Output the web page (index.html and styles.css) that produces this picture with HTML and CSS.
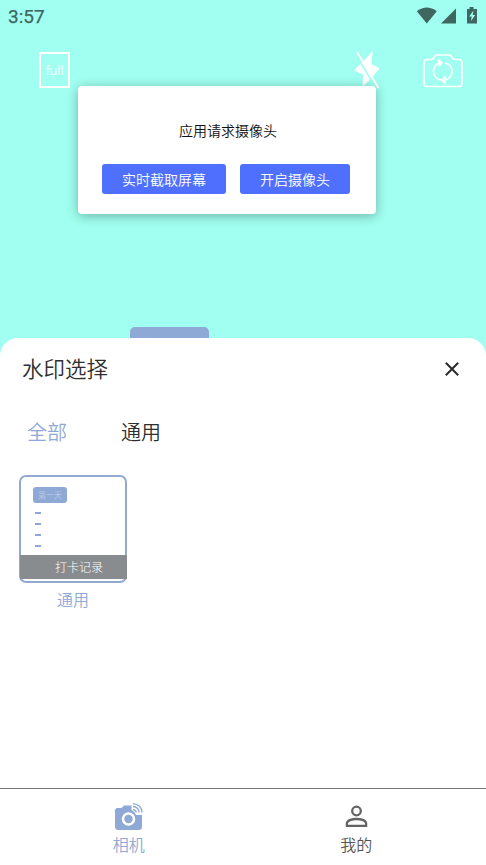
FILE: index.html
```html
<!DOCTYPE html>
<html lang="zh-CN">
<head>
<meta charset="utf-8">
<title>水印相机</title>
<link rel="stylesheet" href="styles.css">
</head>
<body>
<main class="phone">
  <section class="camera">
    <header class="status">
      <span class="time">3:57</span>
      <svg class="status-icons" width="62" height="20" viewBox="0 0 62 20" fill="#3f665f">
        <path d="M.8 4.300Q10.800-3.200 20.800 4.300L10.800 16.500Z"/>
        <path d="M25 16.500L40 1.500V16.500Z"/>
        <path d="M51 2h2.500V0h4v2H61v14.500H51Z"/>
        <path d="M57.500 3.500l-4.300 6h2.500l-.7 4.500 4.200-6h-2.500Z" fill="#a0fff0"/>
      </svg>
    </header>
    <div class="tools">
      <span class="full">full</span>
      <svg class="flash" width="28" height="40" viewBox="0 0 28 40">
        <path d="M18.500 1L10.500 10 0 20.500 9 24.500 8.500 37 16.500 29 25.500 18.500 17.500 14Z" fill="#fff"/>
        <path d="M1.500 4L23 40" stroke="#a0fff0" stroke-width="1.500"/>
        <path d="M3 2L24.500 38" stroke="#fff" stroke-width="2"/>
      </svg>
      <svg class="flip" width="40" height="34" viewBox="0 0 40 34" fill="none" stroke="#fff" stroke-width="1.700" stroke-linejoin="round" stroke-linecap="round">
        <path d="M4 5.500H8Q10 5.500 11 3.500L12 2Q12.500 1 14 1H26Q27.500 1 28 2L29 3.500Q30 5.500 32 5.500H36Q39 5.500 39 8.500V29.500Q39 32.500 36 32.500H4Q1 32.500 1 29.500V8.500Q1 5.500 4 5.500Z"/>
        <path d="M18 26C8 24.500 8 9.500 18 8.500M22.500 9C31.500 12 31.500 24 20.500 26.500"/>
        <path d="M15.500 5.500L19.500 8.500 16.500 12.500ZM22 22.500L18.500 26.500 22 29.500Z" fill="#fff" stroke-width="1"/>
      </svg>
    </div>
    <div class="badge"></div>
    <div class="dialog">
      <p class="dialog-text">应用请求摄像头</p>
      <div class="dialog-actions">
        <button class="btn">实时截取屏幕</button>
        <button class="btn btn-small">开启摄像头</button>
      </div>
    </div>
  </section>
  <section class="sheet">
    <header class="sheet-head">
      <h1 class="title">水印选择</h1>
      <svg width="14" height="14" viewBox="0 0 14 14" stroke="#2b2b2b" stroke-width="2"><path d="M.8.8L13.200 13.200M13.200.8L.8 13.200"/></svg>
    </header>
    <nav class="tabs"><span class="active">全部</span><span>通用</span></nav>
    <div class="card">
      <div class="thumb">
        <span class="tag">第一天</span>
        <div class="dashes"><i></i><i></i><i></i><i></i></div>
        <div class="caption">打卡记录</div>
      </div>
      <span class="card-name">通用</span>
    </div>
  </section>
  <nav class="bottom">
    <div class="item active">
      <svg width="29" height="30" viewBox="0 0 29 30">
        <path d="M3.500 6H7.500L10 3.500H17.500V8Q21 9.500 22 13H28V24.500Q28 28 24.500 28H4.500Q1 28 1 24.500V8.500Q1 6 3.500 6Z" fill="#8ea9d5"/>
        <circle cx="14.500" cy="17" r="5.500" fill="none" stroke="#fff" stroke-width="2.600"/>
        <path d="M19 7.500Q22 8 22.300 10.500M19 4.500Q24.700 5 25.200 10.500M19 1.700Q27.500 2.500 28 10.500" fill="none" stroke="#8ea9d5" stroke-width="1.300"/>
      </svg>
      <span>相机</span>
    </div>
    <div class="item">
      <svg width="29" height="30" viewBox="0 0 29 30" fill="none" stroke="#646464" stroke-width="2.300">
        <circle cx="14.500" cy="9" r="4.300"/>
        <path d="M4.900 23.800V21.500C4.900 15.500 24.100 15.500 24.100 21.500V23.800Z"/>
      </svg>
      <span>我的</span>
    </div>
  </nav>
</main>
</body>
</html>
```
FILE: styles.css
```css
* { box-sizing: border-box; }
body { margin: 0; font-family: "Noto Sans CJK SC", sans-serif; font-weight: 350; }
.phone { width: 486px; height: 865px; display: flex; flex-direction: column; background: #a0fff0; overflow: hidden; }
.camera { position: relative; height: 338px; flex: none; display: flex; flex-direction: column; }
.status { height: 34px; padding: 0 8px; display: flex; align-items: center; justify-content: space-between; }
.time { font: 400 19px/34px Roboto, sans-serif; color: #3f665f; -webkit-text-stroke: .25px #3f665f; }
.status-icons { margin-top: -1px; }
.tools { height: 58px; padding: 14px 23px 0 39px; display: flex; align-items: flex-start; }
.full { width: 31px; height: 36px; margin-top: 4px; border: 2px solid #fff; color: #fff; font: 400 12.500px/34px "Open Sans", sans-serif; text-align: center; }
.flash { margin: 2px 0 0 284px; }
.flip { margin: 6px 0 0 auto; }
.badge { width: 79px; height: 11px; margin: auto 0 0 130px; border-radius: 5px 5px 0 0; background: #8ea9d5; }
.dialog { position: absolute; left: 78px; top: 86px; width: 298px; height: 128px; padding: 33px 24px 20px; border-radius: 4px; background: #fff; box-shadow: 0 2px 12px rgba(0,0,0,.3); }
.dialog-text { margin: 0 0 23px; font-size: 14px; line-height: 22px; text-align: center; color: #111; text-indent: 2px; }
.dialog-actions { display: flex; gap: 14px; }
.btn { width: 124px; height: 30px; padding: 0; border: 0; border-radius: 3px; background: #4f70ff; color: #fff; font: inherit; font-size: 14px; line-height: 30px; }
.btn-small { width: 110px; }
.sheet { height: 450px; flex: none; border-radius: 18px 18px 0 0; background: #fff; color: #2f2f2f; }
.sheet-head { height: 62px; padding: 0 27px 0 22px; display: flex; align-items: center; justify-content: space-between; }
.title { margin: -2px 0 0; font-size: 21.500px; line-height: 32px; font-weight: inherit; }
.tabs { height: 64px; padding: 0 0 2px 27px; display: flex; gap: 54px; align-items: center; font-size: 20px; }
.active { color: #8ea9d5; }
.card { width: 108px; margin: 11px 0 0 19px; display: flex; flex-direction: column; align-items: center; }
.thumb { width: 108px; height: 108px; padding-top: 10px; display: flex; flex-direction: column; border: 2px solid #93aad0; border-radius: 7px; }
.tag { width: 34px; height: 16px; margin-left: 12px; border-radius: 3px; background: #8ea9d5; color: #cddaf0; font: 300 8px/15px "Noto Sans CJK SC", sans-serif; text-align: center; }
.dashes { margin: 9px 0 0 14px; display: flex; flex-direction: column; gap: 9px; }
.dashes i { width: 6px; height: 2px; background: #8ea9d5; }
.caption { height: 24px; margin: auto -2px 2px -1px; padding-left: 11px; background: #888c8e; color: #fff; font-size: 12px; font-weight: 300; line-height: 24px; text-align: center; }
.card-name { margin-top: 5px; color: #8ea9d5; font-size: 16px; line-height: 22px; }
.bottom { flex: 1; display: flex; padding: 0 16px 0 15px; border-top: 1px solid #777; background: #fff; }
.item { flex: 1; padding-top: 13px; display: flex; flex-direction: column; align-items: center; font-size: 16px; line-height: 24px; color: #555; }
.item.active { color: #8ea9d5; }
```
